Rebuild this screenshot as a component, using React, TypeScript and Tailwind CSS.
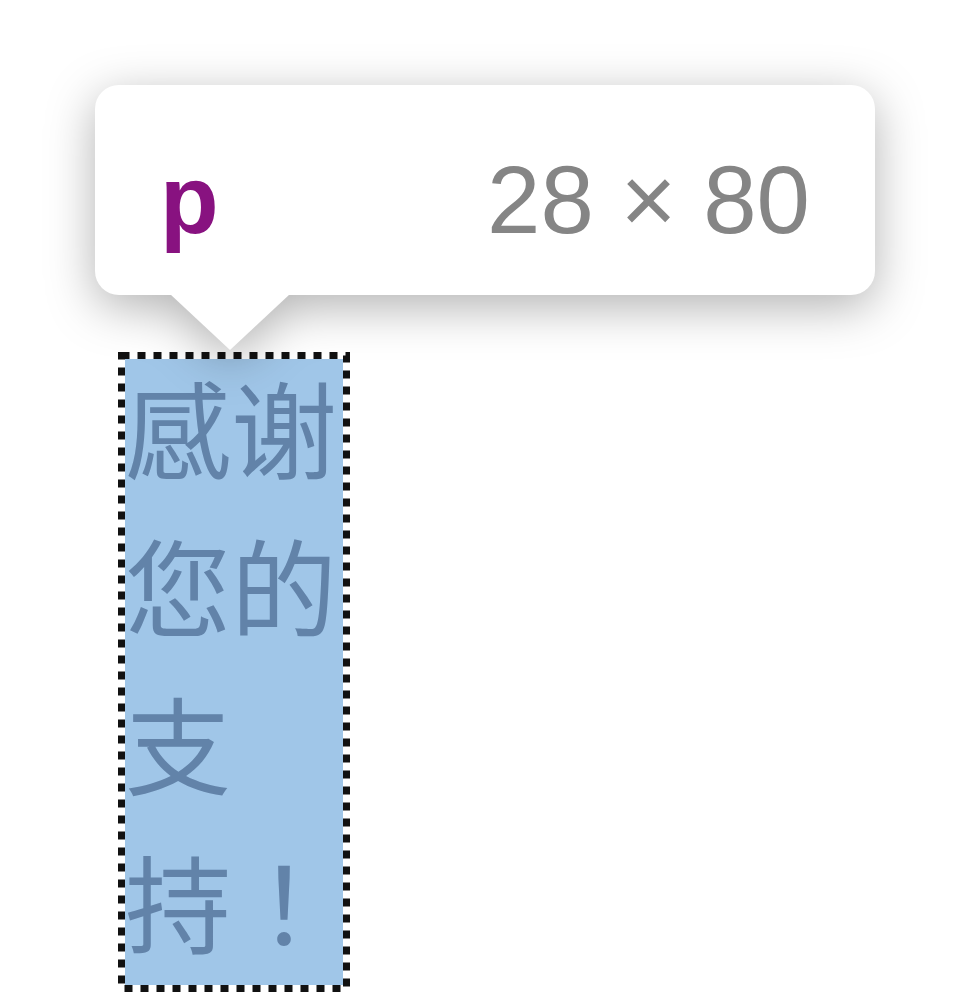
import React from 'react';

// Inspector tooltip over a highlighted <p>, drawn at 8x zoom
const App: React.FC = () => {
  return (
    <div className="relative w-[962px] h-[1008px] bg-white overflow-hidden">
      {/* Highlighted element */}
      <div className="relative ml-[118px] pt-[352px] w-[232px]">
        <div className="relative w-[232px] h-[640px] p-[7px]">
          <div className="flow-root h-full bg-[#a0c6e8]">
            <p
              className="-mt-[13px] w-[218px] text-[106px] leading-[158px] text-[#6283a9]"
              style={{ fontFamily: '"Noto Sans CJK TC", "Noto Sans CJK SC", sans-serif' }}
            >
              感谢您的支持！
            </p>
          </div>
          <svg className="absolute inset-0 pointer-events-none" width="232" height="640" viewBox="0 0 232 640">
            <rect
              x="3.5"
              y="3.5"
              width="225"
              height="633"
              fill="none"
              stroke="#111"
              strokeWidth="7"
              strokeDasharray="8 8"
            />
          </svg>
        </div>
      </div>

      {/* Tooltip */}
      <div className="absolute left-[95px] top-[85px] drop-shadow-[0_12px_24px_rgba(0,0,0,0.3)]">
        <div
          className="w-[780px] h-[210px] rounded-[24px] bg-white flex items-baseline justify-between px-[65px] pt-[67px] text-[96px] leading-none"
          style={{ fontFamily: '"Liberation Sans", Arial, sans-serif' }}
        >
          <span className="font-bold text-[#881280]">p</span>
          <span className="text-[#858585]">28 × 80</span>
        </div>
        <div className="absolute left-[75px] top-[209px] w-[120px] h-[56px] bg-white [clip-path:polygon(0_0,100%_0,50%_100%)]" />
      </div>
    </div>
  );
};

export default App;
